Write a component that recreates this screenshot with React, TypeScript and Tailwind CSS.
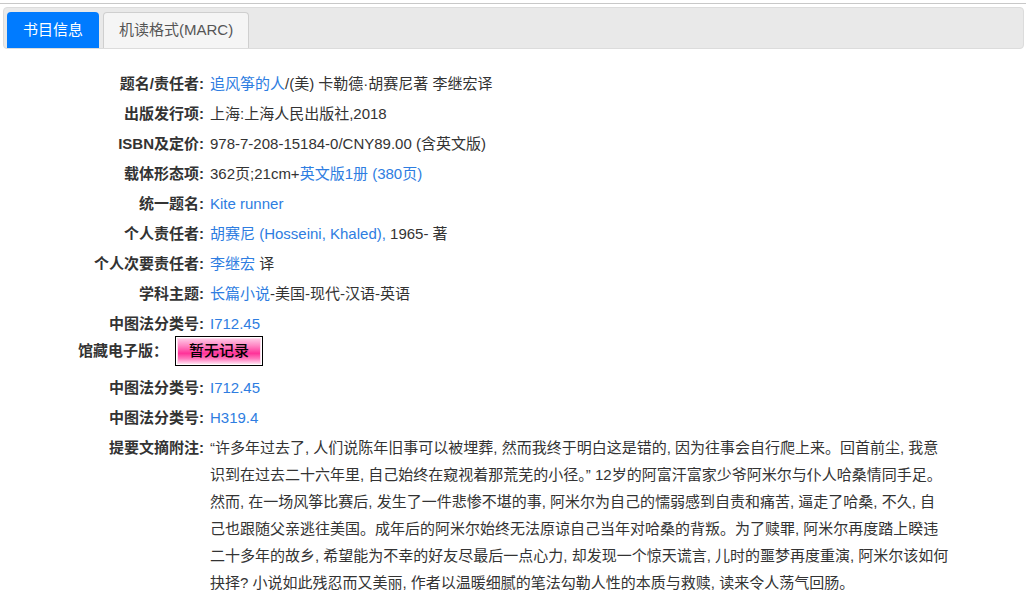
import React from 'react';

type Part = { t: string; link?: boolean };

interface Row {
  label: string;
  parts: Part[];
}

const rows: Row[] = [
  { label: '题名/责任者:', parts: [{ t: '追风筝的人', link: true }, { t: '/(美) 卡勒德·胡赛尼著 李继宏译' }] },
  { label: '出版发行项:', parts: [{ t: '上海:上海人民出版社,2018' }] },
  { label: 'ISBN及定价:', parts: [{ t: '978-7-208-15184-0/CNY89.00 (含英文版)' }] },
  { label: '载体形态项:', parts: [{ t: '362页;21cm+' }, { t: '英文版1册 (380页)', link: true }] },
  { label: '统一题名:', parts: [{ t: 'Kite runner', link: true }] },
  { label: '个人责任者:', parts: [{ t: '胡赛尼 (Hosseini, Khaled),', link: true }, { t: ' 1965- 著' }] },
  { label: '个人次要责任者:', parts: [{ t: '李继宏', link: true }, { t: ' 译' }] },
  { label: '学科主题:', parts: [{ t: '长篇小说', link: true }, { t: '-美国-现代-汉语-英语' }] },
];

const summary = [
  '“许多年过去了, 人们说陈年旧事可以被埋葬, 然而我终于明白这是错的, 因为往事会自行爬上来。回首前尘, 我意',
  '识到在过去二十六年里, 自己始终在窥视着那荒芜的小径。” 12岁的阿富汗富家少爷阿米尔与仆人哈桑情同手足。',
  '然而, 在一场风筝比赛后, 发生了一件悲惨不堪的事, 阿米尔为自己的懦弱感到自责和痛苦, 逼走了哈桑, 不久, 自',
  '己也跟随父亲逃往美国。成年后的阿米尔始终无法原谅自己当年对哈桑的背叛。为了赎罪, 阿米尔再度踏上睽违',
  '二十多年的故乡, 希望能为不幸的好友尽最后一点心力, 却发现一个惊天谎言, 儿时的噩梦再度重演, 阿米尔该如何',
  '抉择? 小说如此残忍而又美丽, 作者以温暖细腻的笔法勾勒人性的本质与救赎, 读来令人荡气回肠。',
];

function Value({ parts }: { parts: Part[] }) {
  return (
    <span className="ml-[6px] whitespace-nowrap text-[#333]">
      {parts.map((p, i) =>
        p.link ? (
          <a key={i} className="text-[#2e7de1] cursor-pointer">{p.t}</a>
        ) : (
          <span key={i}>{p.t}</span>
        )
      )}
    </span>
  );
}

function InfoRow({ label, parts, h = 'h-[30px]' }: Row & { h?: string }) {
  return (
    <div className={`flex ${h} leading-[30px]`}>
      <span className="w-[204px] shrink-0 text-right font-bold text-[#333]">{label}</span>
      <Value parts={parts} />
    </div>
  );
}

export default function App() {
  return (
    <div className="w-[1026px] h-[605px] overflow-hidden bg-white text-[15px] font-['Liberation_Sans','Noto_Sans_CJK_SC',sans-serif]">
      <div className="pt-[3px]">
        <div className="h-px bg-[#c8c8c8]" />
      </div>

      {/* tabs */}
      <div className="mt-[3px] ml-[3px] mr-[2px] h-[42px] bg-[#e9e9e9] border border-[#dcdcdc] rounded-[4px] flex items-end gap-[4px] pl-[3px]">
        <div className="h-[36px] px-[16px] bg-[#007bff] text-white rounded-t-[4px] flex items-center">书目信息</div>
        <div className="h-[36px] px-[15px] bg-[#f5f5f5] text-[#555] border border-b-0 border-[#cfcfcf] rounded-t-[4px] flex items-center">
          机读格式(MARC)
        </div>
      </div>

      <div className="mt-[20px]">
        {rows.map((r) => (
          <InfoRow key={r.label} {...r} />
        ))}
        <InfoRow label="中图法分类号:" parts={[{ t: 'I712.45', link: true }]} h="h-[27px]" />

        <div className="flex items-center h-[30px] pl-[78px]">
          <span className="font-bold text-[#333]">馆藏电子版：</span>
          <div className="ml-[7px] w-[88px] h-[30px] border border-black p-px">
            <div className="h-full border border-[#ffd9ec] bg-[linear-gradient(to_bottom,#ffc4e3_0%,#ff86c4_28%,#ff3399_60%,#ff79bd_82%,#ffcfe8_100%)] flex items-center justify-center text-black font-medium">
              暂无记录
            </div>
          </div>
        </div>

        <div className="mt-[7px]">
          <InfoRow label="中图法分类号:" parts={[{ t: 'I712.45', link: true }]} />
          <InfoRow label="中图法分类号:" parts={[{ t: 'H319.4', link: true }]} />
        </div>

        <div className="flex mt-[1px] leading-[27px]">
          <span className="w-[204px] shrink-0 text-right font-bold text-[#333]">提要文摘附注:</span>
          <div className="ml-[6px] text-[#333]">
            {summary.map((line, i) => (
              <div key={i} className="whitespace-nowrap">{line}</div>
            ))}
          </div>
        </div>
      </div>
    </div>
  );
}
